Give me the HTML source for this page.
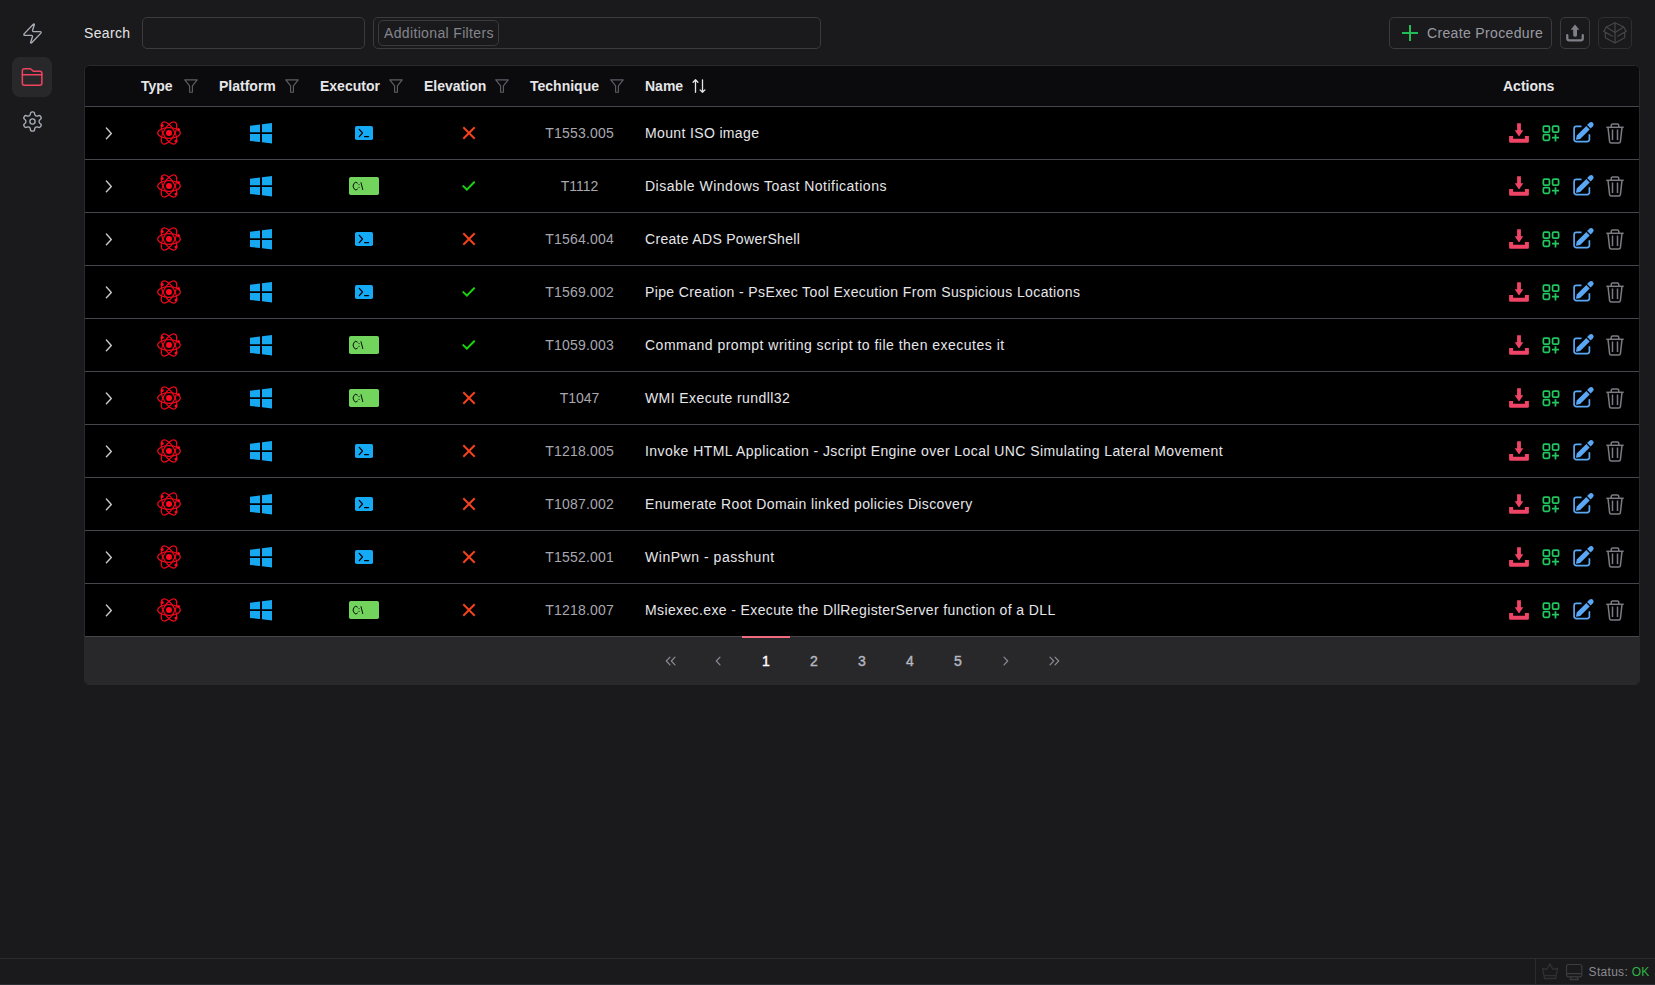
<!DOCTYPE html><html><head><meta charset="utf-8"><style>
*{box-sizing:border-box;margin:0;padding:0}
html,body{width:1655px;height:985px;overflow:hidden;background:#1a1a1c;font-family:"Liberation Sans",sans-serif;color:#e4e4e7}
.a{position:absolute}
svg{position:absolute;overflow:visible}
.lbl{font-size:14px;line-height:14px;white-space:nowrap;letter-spacing:.35px}
.box{position:absolute;border:1px solid #3a3a3f;border-radius:5px}
.th{position:absolute;font-size:14px;line-height:14px;font-weight:bold;color:#e6e6e9;white-space:nowrap}
.tech{position:absolute;font-size:14px;line-height:14px;color:#a8a8b0;white-space:nowrap;text-align:center;width:120px}
.nm{position:absolute;font-size:14px;line-height:14px;color:#e6e6ea;white-space:nowrap;letter-spacing:.35px;left:645px}
.pg{position:absolute;font-size:14px;line-height:14px;font-weight:normal;-webkit-text-stroke:.4px currentColor;color:#b4b4bc;width:48px;text-align:center}
</style></head><body>
<svg style="left:20.5px;top:21.5px" width="23" height="23" viewBox="0 0 24 24" fill="none" stroke="#a9adb8" stroke-width="1.4" stroke-linecap="round" stroke-linejoin="round"><path d="M4 14a1 1 0 0 1-.78-1.63l9.9-10.2a.5.5 0 0 1 .86.46l-1.92 6.02A1 1 0 0 0 13 10h7a1 1 0 0 1 .78 1.63l-9.9 10.2a.5.5 0 0 1-.86-.46l1.92-6.02A1 1 0 0 0 11 14z"/></svg>
<div class="a" style="left:12px;top:57px;width:40px;height:40px;border-radius:8px;background:#28282b"></div>
<svg style="left:20px;top:66px" width="24" height="24" viewBox="0 0 24 24" fill="none" stroke="#f0435f" stroke-width="1.5" stroke-linecap="round" stroke-linejoin="round"><path d="M4.35 2.75H10.2a1 1 0 0 1 .7.3L13.3 5.3H19.85a2 2 0 0 1 2 2V17.25a2 2 0 0 1-2 2H4.35a2 2 0 0 1-2-2V4.75a2 2 0 0 1 2-2Z"/><path d="M2.35 8.7H21.85"/></svg>
<svg style="left:20.5px;top:109.5px" width="23" height="23" viewBox="0 0 24 24" fill="none" stroke="#a9adb8" stroke-width="1.4" stroke-linecap="round" stroke-linejoin="round"><path d="M12.22 2h-.44a2 2 0 0 0-2 2v.18a2 2 0 0 1-1 1.73l-.43.25a2 2 0 0 1-2 0l-.15-.08a2 2 0 0 0-2.73.73l-.22.38a2 2 0 0 0 .73 2.73l.15.1a2 2 0 0 1 1 1.72v.51a2 2 0 0 1-1 1.74l-.15.09a2 2 0 0 0-.73 2.73l.22.38a2 2 0 0 0 2.73.73l.15-.08a2 2 0 0 1 2 0l.43.25a2 2 0 0 1 1 1.73V20a2 2 0 0 0 2 2h.44a2 2 0 0 0 2-2v-.18a2 2 0 0 1 1-1.73l.43-.25a2 2 0 0 1 2 0l.15.08a2 2 0 0 0 2.73-.73l.22-.39a2 2 0 0 0-.73-2.73l-.15-.08a2 2 0 0 1-1-1.74v-.5a2 2 0 0 1 1-1.74l.15-.09a2 2 0 0 0 .73-2.73l-.22-.38a2 2 0 0 0-2.73-.73l-.15.08a2 2 0 0 1-2 0l-.43-.25a2 2 0 0 1-1-1.73V4a2 2 0 0 0-2-2z"/><circle cx="12" cy="12" r="2.7"/></svg>
<div class="a lbl" style="left:84px;top:26px;color:#e4e4e7;font-weight:normal">Search</div>
<div class="box" style="left:142px;top:17px;width:223px;height:32px"></div>
<div class="box" style="left:373px;top:17px;width:448px;height:32px"></div>
<div class="box" style="left:378px;top:20px;width:121px;height:26px;border-color:#3a3a3f"></div>
<div class="a lbl" style="left:384px;top:26px;color:#85858d">Additional Filters</div>
<div class="box" style="left:1389px;top:17px;width:163px;height:32px"></div>
<svg style="left:1401px;top:24px" width="18" height="18" viewBox="0 0 18 18"><path d="M9 1V17M1 9H17" stroke="#22bb58" stroke-width="2"/></svg>
<div class="a lbl" style="left:1427px;top:26px;color:#9a9aa2">Create Procedure</div>
<div class="box" style="left:1560px;top:17px;width:30px;height:32px"></div>
<svg style="left:1566px;top:24px" width="18" height="18" viewBox="0 0 18 18"><path d="M9 0.4L13.3 5.7H4.7Z" fill="#7f7f87"/><rect x="7.2" y="4" width="3.8" height="8.8" rx="1.9" fill="#7f7f87"/><path d="M1.25 11.1V14.2a2.1 2.1 0 0 0 2.1 2.1H14.65a2.1 2.1 0 0 0 2.1-2.1V11.1" fill="none" stroke="#7f7f87" stroke-width="2.3" stroke-linecap="round"/></svg>
<div class="box" style="left:1598px;top:17px;width:34px;height:32px;border-color:#2e2e32"></div>
<svg style="left:1603px;top:22px" width="24" height="22" viewBox="0 0 24 22" fill="none" stroke="#45454b" stroke-width="1.2" stroke-linejoin="round" stroke-linecap="round"><path d="M12 0.8L3.3 5L12 10.4L20.7 5Z"/><path d="M12 0.8V21M3.3 5L0.8 9.4L9.5 14.2M20.7 5L23.2 9.4L14.5 14.2M2.3 11.2V15.7L12 21L21.7 15.7V11.2"/></svg>
<div class="a" style="left:84px;top:65px;width:1556px;height:620px;border:1px solid #29292d;border-radius:6px 6px 4px 4px;overflow:hidden;background:#000">
<div class="a" style="left:0;top:0;width:100%;height:41px;background:#0b0b0d;border-bottom:1px solid #46464d"></div>
<div class="a" style="left:0;top:41px;width:100%;height:53px;border-bottom:1px solid #46464d"></div>
<div class="a" style="left:0;top:94px;width:100%;height:53px;border-bottom:1px solid #46464d"></div>
<div class="a" style="left:0;top:147px;width:100%;height:53px;border-bottom:1px solid #46464d"></div>
<div class="a" style="left:0;top:200px;width:100%;height:53px;border-bottom:1px solid #46464d"></div>
<div class="a" style="left:0;top:253px;width:100%;height:53px;border-bottom:1px solid #46464d"></div>
<div class="a" style="left:0;top:306px;width:100%;height:53px;border-bottom:1px solid #46464d"></div>
<div class="a" style="left:0;top:359px;width:100%;height:53px;border-bottom:1px solid #46464d"></div>
<div class="a" style="left:0;top:412px;width:100%;height:53px;border-bottom:1px solid #46464d"></div>
<div class="a" style="left:0;top:465px;width:100%;height:53px;border-bottom:1px solid #46464d"></div>
<div class="a" style="left:0;top:518px;width:100%;height:53px;border-bottom:1px solid #46464d"></div>
<div class="a" style="left:0;top:571px;width:100%;height:48px;background:#28282b"></div>
</div>
<div class="th" style="left:141px;top:79px">Type</div><svg class="a" style="left:184px;top:79px" width="14" height="14" viewBox="0 0 14 14"><path d="M0.8 0.8H13.2L8.4 6.8V13.2H5.6V6.8Z" fill="none" stroke="#5e5e67" stroke-width="1.15" stroke-linejoin="round"/></svg>
<div class="th" style="left:219px;top:79px">Platform</div><svg class="a" style="left:285px;top:79px" width="14" height="14" viewBox="0 0 14 14"><path d="M0.8 0.8H13.2L8.4 6.8V13.2H5.6V6.8Z" fill="none" stroke="#5e5e67" stroke-width="1.15" stroke-linejoin="round"/></svg>
<div class="th" style="left:320px;top:79px">Executor</div><svg class="a" style="left:389px;top:79px" width="14" height="14" viewBox="0 0 14 14"><path d="M0.8 0.8H13.2L8.4 6.8V13.2H5.6V6.8Z" fill="none" stroke="#5e5e67" stroke-width="1.15" stroke-linejoin="round"/></svg>
<div class="th" style="left:424px;top:79px">Elevation</div><svg class="a" style="left:495px;top:79px" width="14" height="14" viewBox="0 0 14 14"><path d="M0.8 0.8H13.2L8.4 6.8V13.2H5.6V6.8Z" fill="none" stroke="#5e5e67" stroke-width="1.15" stroke-linejoin="round"/></svg>
<div class="th" style="left:530px;top:79px">Technique</div><svg class="a" style="left:610px;top:79px" width="14" height="14" viewBox="0 0 14 14"><path d="M0.8 0.8H13.2L8.4 6.8V13.2H5.6V6.8Z" fill="none" stroke="#5e5e67" stroke-width="1.15" stroke-linejoin="round"/></svg>
<div class="th" style="left:645px;top:79px">Name</div>
<svg style="left:691px;top:79px" width="16" height="15" viewBox="0 0 16 15" fill="none" stroke="#e6e6e9" stroke-width="1.3" stroke-linecap="round" stroke-linejoin="round"><path d="M4.5 13.3V0.8M2.1 3.2L4.5 0.8L6.9 3.2M11.5 0.8V13.3M9.1 10.9L11.5 13.3L13.9 10.9"/></svg>
<div class="th" style="left:1503px;top:79px">Actions</div>
<svg style="left:105px;top:126.5px" width="8" height="13" viewBox="0 0 8 13"><path d="M1.4 1.1L6.3 6.4L1.4 11.7" fill="none" stroke="#c8c8cc" stroke-width="1.4" stroke-linecap="round" stroke-linejoin="round"/></svg>
<svg style="left:156px;top:120px" width="26" height="26" viewBox="-13 -13 26 26" fill="none" stroke="#f2071b" stroke-width="1.2"><ellipse rx="11.3" ry="5.3"/><ellipse rx="12.3" ry="5.5" transform="rotate(60)"/><ellipse rx="12.3" ry="5.5" transform="rotate(-60)"/><circle r="3" fill="#ff0a1e" stroke="none"/><circle cx="-6.8" cy="-7.4" r="1.5" fill="#ff0a1e" stroke="none"/><circle cx="9.5" cy="-3.5" r="1.5" fill="#ff0a1e" stroke="none"/><circle cx="7" cy="8" r="1.5" fill="#ff0a1e" stroke="none"/></svg>
<svg style="left:250px;top:123px" width="22" height="21" viewBox="0 0 22 21" fill="#17a8f2"><path d="M0 2.7L10 1.5V9.3H0Z"/><path d="M12 1.2L22 0V9.3H12Z"/><path d="M0 11H10V19.1L0 17.9Z"/><path d="M12 11H22V20.4L12 19.3Z"/></svg>
<svg style="left:355px;top:126px" width="18" height="14" viewBox="0 0 18 14"><rect width="18" height="14" rx="1.8" fill="#14aaf5"/><path d="M4.3 3.3L7.5 7L4.3 10.7" fill="none" stroke="#000" stroke-width="1.2" stroke-linecap="round" stroke-linejoin="round"/><path d="M9.6 10.6H13.6" stroke="#000" stroke-width="1.3" stroke-linecap="round"/></svg>
<svg style="left:463px;top:127px" width="12" height="12" viewBox="0 0 12 12"><path d="M1 1L11 11M11 1L1 11" stroke="#f5421e" stroke-width="2" stroke-linecap="square"/></svg>
<div class="tech" style="left:519.6px;top:126px;letter-spacing:0.2px">T1553.005</div>
<div class="nm" style="top:126px;letter-spacing:0.357px">Mount ISO image</div>
<svg style="left:1509px;top:123px" width="20" height="20" viewBox="0 0 20 20" fill="#ef4466"><path d="M8.1 0.3H11.9V7.3H14.3L10 13.5L5.7 7.3H8.1Z"/><path d="M0.1 13H4.1V15.8H15.9V13H19.9V18.4A1.3 1.3 0 0 1 18.6 19.7H1.4A1.3 1.3 0 0 1 0.1 18.4Z"/></svg>
<svg style="left:1542px;top:124.8px" width="18" height="17" viewBox="0 0 18 17" fill="none" stroke="#22c55e" stroke-width="1.75"><rect x="1.35" y="1.2" width="6.1" height="5.9" rx="1.2"/><rect x="10.6" y="1.2" width="6" height="5.9" rx="1.2"/><rect x="1.35" y="9.7" width="6.1" height="5.6" rx="1.2"/><path d="M10 12.7H17M13.5 9.2V16.4"/></svg>
<svg style="left:1573px;top:122px" width="20" height="21" viewBox="0 0 20 21"><path d="M8.5 4.3H3.3a2.2 2.2 0 0 0-2.2 2.2V17.4a2.2 2.2 0 0 0 2.2 2.2H14.2a2.2 2.2 0 0 0 2.2-2.2V12.3" fill="none" stroke="#5aa8f5" stroke-width="1.7"/><path d="M3.41 17.71 L2.99 17.29 L3.77 13.54 L13.31 3.99 L16.71 7.39 L7.16 16.93Z" fill="#5aa8f5"/><path d="M14.09 3.08 L16.35 0.81 A2.50 2.50 0 0 1 19.89 4.35 L17.62 6.61 Z" fill="#5aa8f5"/></svg>
<svg style="left:1606px;top:122.5px" width="18" height="21" viewBox="0 0 18 21" fill="none" stroke="#7b7b82" stroke-width="1.5" stroke-linejoin="round"><path d="M5.2 4V2.4a1.5 1.5 0 0 1 1.5-1.5h4.6a1.5 1.5 0 0 1 1.5 1.5V4"/><path d="M0.3 4.3H17.7"/><path d="M2 4.3L3.6 18.6a1.6 1.6 0 0 0 1.6 1.4H12.8a1.6 1.6 0 0 0 1.6-1.4L16 4.3"/><path d="M6.5 6.6V17M11.5 6.6V17"/></svg>
<svg style="left:105px;top:179.5px" width="8" height="13" viewBox="0 0 8 13"><path d="M1.4 1.1L6.3 6.4L1.4 11.7" fill="none" stroke="#c8c8cc" stroke-width="1.4" stroke-linecap="round" stroke-linejoin="round"/></svg>
<svg style="left:156px;top:173px" width="26" height="26" viewBox="-13 -13 26 26" fill="none" stroke="#f2071b" stroke-width="1.2"><ellipse rx="11.3" ry="5.3"/><ellipse rx="12.3" ry="5.5" transform="rotate(60)"/><ellipse rx="12.3" ry="5.5" transform="rotate(-60)"/><circle r="3" fill="#ff0a1e" stroke="none"/><circle cx="-6.8" cy="-7.4" r="1.5" fill="#ff0a1e" stroke="none"/><circle cx="9.5" cy="-3.5" r="1.5" fill="#ff0a1e" stroke="none"/><circle cx="7" cy="8" r="1.5" fill="#ff0a1e" stroke="none"/></svg>
<svg style="left:250px;top:176px" width="22" height="21" viewBox="0 0 22 21" fill="#17a8f2"><path d="M0 2.7L10 1.5V9.3H0Z"/><path d="M12 1.2L22 0V9.3H12Z"/><path d="M0 11H10V19.1L0 17.9Z"/><path d="M12 11H22V20.4L12 19.3Z"/></svg>
<svg style="left:349px;top:177px" width="30" height="18" viewBox="0 0 30 18"><rect width="30" height="18" rx="1.8" fill="#72d45c"/><path d="M8.7 6.3A2.7 3.75 0 1 0 8.7 11.9" fill="none" stroke="#000" stroke-width="0.95"/><path d="M9.5 7.6H10.6M9.5 10.4H10.6" stroke="#000" stroke-width="0.8"/><path d="M11.9 5.3L13.9 13" stroke="#000" stroke-width="0.95"/></svg>
<svg style="left:462px;top:181px" width="14" height="12" viewBox="0 0 14 12"><path d="M1.3 5.1L4.9 8.7L12.1 1.3" fill="none" stroke="#19d60d" stroke-width="2" stroke-linecap="round"/></svg>
<div class="tech" style="left:519.5px;top:179px;letter-spacing:0px">T1112</div>
<div class="nm" style="top:179px;letter-spacing:0.494px">Disable Windows Toast Notifications</div>
<svg style="left:1509px;top:176px" width="20" height="20" viewBox="0 0 20 20" fill="#ef4466"><path d="M8.1 0.3H11.9V7.3H14.3L10 13.5L5.7 7.3H8.1Z"/><path d="M0.1 13H4.1V15.8H15.9V13H19.9V18.4A1.3 1.3 0 0 1 18.6 19.7H1.4A1.3 1.3 0 0 1 0.1 18.4Z"/></svg>
<svg style="left:1542px;top:177.8px" width="18" height="17" viewBox="0 0 18 17" fill="none" stroke="#22c55e" stroke-width="1.75"><rect x="1.35" y="1.2" width="6.1" height="5.9" rx="1.2"/><rect x="10.6" y="1.2" width="6" height="5.9" rx="1.2"/><rect x="1.35" y="9.7" width="6.1" height="5.6" rx="1.2"/><path d="M10 12.7H17M13.5 9.2V16.4"/></svg>
<svg style="left:1573px;top:175px" width="20" height="21" viewBox="0 0 20 21"><path d="M8.5 4.3H3.3a2.2 2.2 0 0 0-2.2 2.2V17.4a2.2 2.2 0 0 0 2.2 2.2H14.2a2.2 2.2 0 0 0 2.2-2.2V12.3" fill="none" stroke="#5aa8f5" stroke-width="1.7"/><path d="M3.41 17.71 L2.99 17.29 L3.77 13.54 L13.31 3.99 L16.71 7.39 L7.16 16.93Z" fill="#5aa8f5"/><path d="M14.09 3.08 L16.35 0.81 A2.50 2.50 0 0 1 19.89 4.35 L17.62 6.61 Z" fill="#5aa8f5"/></svg>
<svg style="left:1606px;top:175.5px" width="18" height="21" viewBox="0 0 18 21" fill="none" stroke="#7b7b82" stroke-width="1.5" stroke-linejoin="round"><path d="M5.2 4V2.4a1.5 1.5 0 0 1 1.5-1.5h4.6a1.5 1.5 0 0 1 1.5 1.5V4"/><path d="M0.3 4.3H17.7"/><path d="M2 4.3L3.6 18.6a1.6 1.6 0 0 0 1.6 1.4H12.8a1.6 1.6 0 0 0 1.6-1.4L16 4.3"/><path d="M6.5 6.6V17M11.5 6.6V17"/></svg>
<svg style="left:105px;top:232.5px" width="8" height="13" viewBox="0 0 8 13"><path d="M1.4 1.1L6.3 6.4L1.4 11.7" fill="none" stroke="#c8c8cc" stroke-width="1.4" stroke-linecap="round" stroke-linejoin="round"/></svg>
<svg style="left:156px;top:226px" width="26" height="26" viewBox="-13 -13 26 26" fill="none" stroke="#f2071b" stroke-width="1.2"><ellipse rx="11.3" ry="5.3"/><ellipse rx="12.3" ry="5.5" transform="rotate(60)"/><ellipse rx="12.3" ry="5.5" transform="rotate(-60)"/><circle r="3" fill="#ff0a1e" stroke="none"/><circle cx="-6.8" cy="-7.4" r="1.5" fill="#ff0a1e" stroke="none"/><circle cx="9.5" cy="-3.5" r="1.5" fill="#ff0a1e" stroke="none"/><circle cx="7" cy="8" r="1.5" fill="#ff0a1e" stroke="none"/></svg>
<svg style="left:250px;top:229px" width="22" height="21" viewBox="0 0 22 21" fill="#17a8f2"><path d="M0 2.7L10 1.5V9.3H0Z"/><path d="M12 1.2L22 0V9.3H12Z"/><path d="M0 11H10V19.1L0 17.9Z"/><path d="M12 11H22V20.4L12 19.3Z"/></svg>
<svg style="left:355px;top:232px" width="18" height="14" viewBox="0 0 18 14"><rect width="18" height="14" rx="1.8" fill="#14aaf5"/><path d="M4.3 3.3L7.5 7L4.3 10.7" fill="none" stroke="#000" stroke-width="1.2" stroke-linecap="round" stroke-linejoin="round"/><path d="M9.6 10.6H13.6" stroke="#000" stroke-width="1.3" stroke-linecap="round"/></svg>
<svg style="left:463px;top:233px" width="12" height="12" viewBox="0 0 12 12"><path d="M1 1L11 11M11 1L1 11" stroke="#f5421e" stroke-width="2" stroke-linecap="square"/></svg>
<div class="tech" style="left:519.6px;top:232px;letter-spacing:0.2px">T1564.004</div>
<div class="nm" style="top:232px;letter-spacing:0.310px">Create ADS PowerShell</div>
<svg style="left:1509px;top:229px" width="20" height="20" viewBox="0 0 20 20" fill="#ef4466"><path d="M8.1 0.3H11.9V7.3H14.3L10 13.5L5.7 7.3H8.1Z"/><path d="M0.1 13H4.1V15.8H15.9V13H19.9V18.4A1.3 1.3 0 0 1 18.6 19.7H1.4A1.3 1.3 0 0 1 0.1 18.4Z"/></svg>
<svg style="left:1542px;top:230.8px" width="18" height="17" viewBox="0 0 18 17" fill="none" stroke="#22c55e" stroke-width="1.75"><rect x="1.35" y="1.2" width="6.1" height="5.9" rx="1.2"/><rect x="10.6" y="1.2" width="6" height="5.9" rx="1.2"/><rect x="1.35" y="9.7" width="6.1" height="5.6" rx="1.2"/><path d="M10 12.7H17M13.5 9.2V16.4"/></svg>
<svg style="left:1573px;top:228px" width="20" height="21" viewBox="0 0 20 21"><path d="M8.5 4.3H3.3a2.2 2.2 0 0 0-2.2 2.2V17.4a2.2 2.2 0 0 0 2.2 2.2H14.2a2.2 2.2 0 0 0 2.2-2.2V12.3" fill="none" stroke="#5aa8f5" stroke-width="1.7"/><path d="M3.41 17.71 L2.99 17.29 L3.77 13.54 L13.31 3.99 L16.71 7.39 L7.16 16.93Z" fill="#5aa8f5"/><path d="M14.09 3.08 L16.35 0.81 A2.50 2.50 0 0 1 19.89 4.35 L17.62 6.61 Z" fill="#5aa8f5"/></svg>
<svg style="left:1606px;top:228.5px" width="18" height="21" viewBox="0 0 18 21" fill="none" stroke="#7b7b82" stroke-width="1.5" stroke-linejoin="round"><path d="M5.2 4V2.4a1.5 1.5 0 0 1 1.5-1.5h4.6a1.5 1.5 0 0 1 1.5 1.5V4"/><path d="M0.3 4.3H17.7"/><path d="M2 4.3L3.6 18.6a1.6 1.6 0 0 0 1.6 1.4H12.8a1.6 1.6 0 0 0 1.6-1.4L16 4.3"/><path d="M6.5 6.6V17M11.5 6.6V17"/></svg>
<svg style="left:105px;top:285.5px" width="8" height="13" viewBox="0 0 8 13"><path d="M1.4 1.1L6.3 6.4L1.4 11.7" fill="none" stroke="#c8c8cc" stroke-width="1.4" stroke-linecap="round" stroke-linejoin="round"/></svg>
<svg style="left:156px;top:279px" width="26" height="26" viewBox="-13 -13 26 26" fill="none" stroke="#f2071b" stroke-width="1.2"><ellipse rx="11.3" ry="5.3"/><ellipse rx="12.3" ry="5.5" transform="rotate(60)"/><ellipse rx="12.3" ry="5.5" transform="rotate(-60)"/><circle r="3" fill="#ff0a1e" stroke="none"/><circle cx="-6.8" cy="-7.4" r="1.5" fill="#ff0a1e" stroke="none"/><circle cx="9.5" cy="-3.5" r="1.5" fill="#ff0a1e" stroke="none"/><circle cx="7" cy="8" r="1.5" fill="#ff0a1e" stroke="none"/></svg>
<svg style="left:250px;top:282px" width="22" height="21" viewBox="0 0 22 21" fill="#17a8f2"><path d="M0 2.7L10 1.5V9.3H0Z"/><path d="M12 1.2L22 0V9.3H12Z"/><path d="M0 11H10V19.1L0 17.9Z"/><path d="M12 11H22V20.4L12 19.3Z"/></svg>
<svg style="left:355px;top:285px" width="18" height="14" viewBox="0 0 18 14"><rect width="18" height="14" rx="1.8" fill="#14aaf5"/><path d="M4.3 3.3L7.5 7L4.3 10.7" fill="none" stroke="#000" stroke-width="1.2" stroke-linecap="round" stroke-linejoin="round"/><path d="M9.6 10.6H13.6" stroke="#000" stroke-width="1.3" stroke-linecap="round"/></svg>
<svg style="left:462px;top:287px" width="14" height="12" viewBox="0 0 14 12"><path d="M1.3 5.1L4.9 8.7L12.1 1.3" fill="none" stroke="#19d60d" stroke-width="2" stroke-linecap="round"/></svg>
<div class="tech" style="left:519.6px;top:285px;letter-spacing:0.2px">T1569.002</div>
<div class="nm" style="top:285px;letter-spacing:0.379px">Pipe Creation - PsExec Tool Execution From Suspicious Locations</div>
<svg style="left:1509px;top:282px" width="20" height="20" viewBox="0 0 20 20" fill="#ef4466"><path d="M8.1 0.3H11.9V7.3H14.3L10 13.5L5.7 7.3H8.1Z"/><path d="M0.1 13H4.1V15.8H15.9V13H19.9V18.4A1.3 1.3 0 0 1 18.6 19.7H1.4A1.3 1.3 0 0 1 0.1 18.4Z"/></svg>
<svg style="left:1542px;top:283.8px" width="18" height="17" viewBox="0 0 18 17" fill="none" stroke="#22c55e" stroke-width="1.75"><rect x="1.35" y="1.2" width="6.1" height="5.9" rx="1.2"/><rect x="10.6" y="1.2" width="6" height="5.9" rx="1.2"/><rect x="1.35" y="9.7" width="6.1" height="5.6" rx="1.2"/><path d="M10 12.7H17M13.5 9.2V16.4"/></svg>
<svg style="left:1573px;top:281px" width="20" height="21" viewBox="0 0 20 21"><path d="M8.5 4.3H3.3a2.2 2.2 0 0 0-2.2 2.2V17.4a2.2 2.2 0 0 0 2.2 2.2H14.2a2.2 2.2 0 0 0 2.2-2.2V12.3" fill="none" stroke="#5aa8f5" stroke-width="1.7"/><path d="M3.41 17.71 L2.99 17.29 L3.77 13.54 L13.31 3.99 L16.71 7.39 L7.16 16.93Z" fill="#5aa8f5"/><path d="M14.09 3.08 L16.35 0.81 A2.50 2.50 0 0 1 19.89 4.35 L17.62 6.61 Z" fill="#5aa8f5"/></svg>
<svg style="left:1606px;top:281.5px" width="18" height="21" viewBox="0 0 18 21" fill="none" stroke="#7b7b82" stroke-width="1.5" stroke-linejoin="round"><path d="M5.2 4V2.4a1.5 1.5 0 0 1 1.5-1.5h4.6a1.5 1.5 0 0 1 1.5 1.5V4"/><path d="M0.3 4.3H17.7"/><path d="M2 4.3L3.6 18.6a1.6 1.6 0 0 0 1.6 1.4H12.8a1.6 1.6 0 0 0 1.6-1.4L16 4.3"/><path d="M6.5 6.6V17M11.5 6.6V17"/></svg>
<svg style="left:105px;top:338.5px" width="8" height="13" viewBox="0 0 8 13"><path d="M1.4 1.1L6.3 6.4L1.4 11.7" fill="none" stroke="#c8c8cc" stroke-width="1.4" stroke-linecap="round" stroke-linejoin="round"/></svg>
<svg style="left:156px;top:332px" width="26" height="26" viewBox="-13 -13 26 26" fill="none" stroke="#f2071b" stroke-width="1.2"><ellipse rx="11.3" ry="5.3"/><ellipse rx="12.3" ry="5.5" transform="rotate(60)"/><ellipse rx="12.3" ry="5.5" transform="rotate(-60)"/><circle r="3" fill="#ff0a1e" stroke="none"/><circle cx="-6.8" cy="-7.4" r="1.5" fill="#ff0a1e" stroke="none"/><circle cx="9.5" cy="-3.5" r="1.5" fill="#ff0a1e" stroke="none"/><circle cx="7" cy="8" r="1.5" fill="#ff0a1e" stroke="none"/></svg>
<svg style="left:250px;top:335px" width="22" height="21" viewBox="0 0 22 21" fill="#17a8f2"><path d="M0 2.7L10 1.5V9.3H0Z"/><path d="M12 1.2L22 0V9.3H12Z"/><path d="M0 11H10V19.1L0 17.9Z"/><path d="M12 11H22V20.4L12 19.3Z"/></svg>
<svg style="left:349px;top:336px" width="30" height="18" viewBox="0 0 30 18"><rect width="30" height="18" rx="1.8" fill="#72d45c"/><path d="M8.7 6.3A2.7 3.75 0 1 0 8.7 11.9" fill="none" stroke="#000" stroke-width="0.95"/><path d="M9.5 7.6H10.6M9.5 10.4H10.6" stroke="#000" stroke-width="0.8"/><path d="M11.9 5.3L13.9 13" stroke="#000" stroke-width="0.95"/></svg>
<svg style="left:462px;top:340px" width="14" height="12" viewBox="0 0 14 12"><path d="M1.3 5.1L4.9 8.7L12.1 1.3" fill="none" stroke="#19d60d" stroke-width="2" stroke-linecap="round"/></svg>
<div class="tech" style="left:519.6px;top:338px;letter-spacing:0.2px">T1059.003</div>
<div class="nm" style="top:338px;letter-spacing:0.493px">Command prompt writing script to file then executes it</div>
<svg style="left:1509px;top:335px" width="20" height="20" viewBox="0 0 20 20" fill="#ef4466"><path d="M8.1 0.3H11.9V7.3H14.3L10 13.5L5.7 7.3H8.1Z"/><path d="M0.1 13H4.1V15.8H15.9V13H19.9V18.4A1.3 1.3 0 0 1 18.6 19.7H1.4A1.3 1.3 0 0 1 0.1 18.4Z"/></svg>
<svg style="left:1542px;top:336.8px" width="18" height="17" viewBox="0 0 18 17" fill="none" stroke="#22c55e" stroke-width="1.75"><rect x="1.35" y="1.2" width="6.1" height="5.9" rx="1.2"/><rect x="10.6" y="1.2" width="6" height="5.9" rx="1.2"/><rect x="1.35" y="9.7" width="6.1" height="5.6" rx="1.2"/><path d="M10 12.7H17M13.5 9.2V16.4"/></svg>
<svg style="left:1573px;top:334px" width="20" height="21" viewBox="0 0 20 21"><path d="M8.5 4.3H3.3a2.2 2.2 0 0 0-2.2 2.2V17.4a2.2 2.2 0 0 0 2.2 2.2H14.2a2.2 2.2 0 0 0 2.2-2.2V12.3" fill="none" stroke="#5aa8f5" stroke-width="1.7"/><path d="M3.41 17.71 L2.99 17.29 L3.77 13.54 L13.31 3.99 L16.71 7.39 L7.16 16.93Z" fill="#5aa8f5"/><path d="M14.09 3.08 L16.35 0.81 A2.50 2.50 0 0 1 19.89 4.35 L17.62 6.61 Z" fill="#5aa8f5"/></svg>
<svg style="left:1606px;top:334.5px" width="18" height="21" viewBox="0 0 18 21" fill="none" stroke="#7b7b82" stroke-width="1.5" stroke-linejoin="round"><path d="M5.2 4V2.4a1.5 1.5 0 0 1 1.5-1.5h4.6a1.5 1.5 0 0 1 1.5 1.5V4"/><path d="M0.3 4.3H17.7"/><path d="M2 4.3L3.6 18.6a1.6 1.6 0 0 0 1.6 1.4H12.8a1.6 1.6 0 0 0 1.6-1.4L16 4.3"/><path d="M6.5 6.6V17M11.5 6.6V17"/></svg>
<svg style="left:105px;top:391.5px" width="8" height="13" viewBox="0 0 8 13"><path d="M1.4 1.1L6.3 6.4L1.4 11.7" fill="none" stroke="#c8c8cc" stroke-width="1.4" stroke-linecap="round" stroke-linejoin="round"/></svg>
<svg style="left:156px;top:385px" width="26" height="26" viewBox="-13 -13 26 26" fill="none" stroke="#f2071b" stroke-width="1.2"><ellipse rx="11.3" ry="5.3"/><ellipse rx="12.3" ry="5.5" transform="rotate(60)"/><ellipse rx="12.3" ry="5.5" transform="rotate(-60)"/><circle r="3" fill="#ff0a1e" stroke="none"/><circle cx="-6.8" cy="-7.4" r="1.5" fill="#ff0a1e" stroke="none"/><circle cx="9.5" cy="-3.5" r="1.5" fill="#ff0a1e" stroke="none"/><circle cx="7" cy="8" r="1.5" fill="#ff0a1e" stroke="none"/></svg>
<svg style="left:250px;top:388px" width="22" height="21" viewBox="0 0 22 21" fill="#17a8f2"><path d="M0 2.7L10 1.5V9.3H0Z"/><path d="M12 1.2L22 0V9.3H12Z"/><path d="M0 11H10V19.1L0 17.9Z"/><path d="M12 11H22V20.4L12 19.3Z"/></svg>
<svg style="left:349px;top:389px" width="30" height="18" viewBox="0 0 30 18"><rect width="30" height="18" rx="1.8" fill="#72d45c"/><path d="M8.7 6.3A2.7 3.75 0 1 0 8.7 11.9" fill="none" stroke="#000" stroke-width="0.95"/><path d="M9.5 7.6H10.6M9.5 10.4H10.6" stroke="#000" stroke-width="0.8"/><path d="M11.9 5.3L13.9 13" stroke="#000" stroke-width="0.95"/></svg>
<svg style="left:463px;top:392px" width="12" height="12" viewBox="0 0 12 12"><path d="M1 1L11 11M11 1L1 11" stroke="#f5421e" stroke-width="2" stroke-linecap="square"/></svg>
<div class="tech" style="left:519.5px;top:391px;letter-spacing:0px">T1047</div>
<div class="nm" style="top:391px;letter-spacing:0.408px">WMI Execute rundll32</div>
<svg style="left:1509px;top:388px" width="20" height="20" viewBox="0 0 20 20" fill="#ef4466"><path d="M8.1 0.3H11.9V7.3H14.3L10 13.5L5.7 7.3H8.1Z"/><path d="M0.1 13H4.1V15.8H15.9V13H19.9V18.4A1.3 1.3 0 0 1 18.6 19.7H1.4A1.3 1.3 0 0 1 0.1 18.4Z"/></svg>
<svg style="left:1542px;top:389.8px" width="18" height="17" viewBox="0 0 18 17" fill="none" stroke="#22c55e" stroke-width="1.75"><rect x="1.35" y="1.2" width="6.1" height="5.9" rx="1.2"/><rect x="10.6" y="1.2" width="6" height="5.9" rx="1.2"/><rect x="1.35" y="9.7" width="6.1" height="5.6" rx="1.2"/><path d="M10 12.7H17M13.5 9.2V16.4"/></svg>
<svg style="left:1573px;top:387px" width="20" height="21" viewBox="0 0 20 21"><path d="M8.5 4.3H3.3a2.2 2.2 0 0 0-2.2 2.2V17.4a2.2 2.2 0 0 0 2.2 2.2H14.2a2.2 2.2 0 0 0 2.2-2.2V12.3" fill="none" stroke="#5aa8f5" stroke-width="1.7"/><path d="M3.41 17.71 L2.99 17.29 L3.77 13.54 L13.31 3.99 L16.71 7.39 L7.16 16.93Z" fill="#5aa8f5"/><path d="M14.09 3.08 L16.35 0.81 A2.50 2.50 0 0 1 19.89 4.35 L17.62 6.61 Z" fill="#5aa8f5"/></svg>
<svg style="left:1606px;top:387.5px" width="18" height="21" viewBox="0 0 18 21" fill="none" stroke="#7b7b82" stroke-width="1.5" stroke-linejoin="round"><path d="M5.2 4V2.4a1.5 1.5 0 0 1 1.5-1.5h4.6a1.5 1.5 0 0 1 1.5 1.5V4"/><path d="M0.3 4.3H17.7"/><path d="M2 4.3L3.6 18.6a1.6 1.6 0 0 0 1.6 1.4H12.8a1.6 1.6 0 0 0 1.6-1.4L16 4.3"/><path d="M6.5 6.6V17M11.5 6.6V17"/></svg>
<svg style="left:105px;top:444.5px" width="8" height="13" viewBox="0 0 8 13"><path d="M1.4 1.1L6.3 6.4L1.4 11.7" fill="none" stroke="#c8c8cc" stroke-width="1.4" stroke-linecap="round" stroke-linejoin="round"/></svg>
<svg style="left:156px;top:438px" width="26" height="26" viewBox="-13 -13 26 26" fill="none" stroke="#f2071b" stroke-width="1.2"><ellipse rx="11.3" ry="5.3"/><ellipse rx="12.3" ry="5.5" transform="rotate(60)"/><ellipse rx="12.3" ry="5.5" transform="rotate(-60)"/><circle r="3" fill="#ff0a1e" stroke="none"/><circle cx="-6.8" cy="-7.4" r="1.5" fill="#ff0a1e" stroke="none"/><circle cx="9.5" cy="-3.5" r="1.5" fill="#ff0a1e" stroke="none"/><circle cx="7" cy="8" r="1.5" fill="#ff0a1e" stroke="none"/></svg>
<svg style="left:250px;top:441px" width="22" height="21" viewBox="0 0 22 21" fill="#17a8f2"><path d="M0 2.7L10 1.5V9.3H0Z"/><path d="M12 1.2L22 0V9.3H12Z"/><path d="M0 11H10V19.1L0 17.9Z"/><path d="M12 11H22V20.4L12 19.3Z"/></svg>
<svg style="left:355px;top:444px" width="18" height="14" viewBox="0 0 18 14"><rect width="18" height="14" rx="1.8" fill="#14aaf5"/><path d="M4.3 3.3L7.5 7L4.3 10.7" fill="none" stroke="#000" stroke-width="1.2" stroke-linecap="round" stroke-linejoin="round"/><path d="M9.6 10.6H13.6" stroke="#000" stroke-width="1.3" stroke-linecap="round"/></svg>
<svg style="left:463px;top:445px" width="12" height="12" viewBox="0 0 12 12"><path d="M1 1L11 11M11 1L1 11" stroke="#f5421e" stroke-width="2" stroke-linecap="square"/></svg>
<div class="tech" style="left:519.6px;top:444px;letter-spacing:0.2px">T1218.005</div>
<div class="nm" style="top:444px;letter-spacing:0.427px">Invoke HTML Application - Jscript Engine over Local UNC Simulating Lateral Movement</div>
<svg style="left:1509px;top:441px" width="20" height="20" viewBox="0 0 20 20" fill="#ef4466"><path d="M8.1 0.3H11.9V7.3H14.3L10 13.5L5.7 7.3H8.1Z"/><path d="M0.1 13H4.1V15.8H15.9V13H19.9V18.4A1.3 1.3 0 0 1 18.6 19.7H1.4A1.3 1.3 0 0 1 0.1 18.4Z"/></svg>
<svg style="left:1542px;top:442.8px" width="18" height="17" viewBox="0 0 18 17" fill="none" stroke="#22c55e" stroke-width="1.75"><rect x="1.35" y="1.2" width="6.1" height="5.9" rx="1.2"/><rect x="10.6" y="1.2" width="6" height="5.9" rx="1.2"/><rect x="1.35" y="9.7" width="6.1" height="5.6" rx="1.2"/><path d="M10 12.7H17M13.5 9.2V16.4"/></svg>
<svg style="left:1573px;top:440px" width="20" height="21" viewBox="0 0 20 21"><path d="M8.5 4.3H3.3a2.2 2.2 0 0 0-2.2 2.2V17.4a2.2 2.2 0 0 0 2.2 2.2H14.2a2.2 2.2 0 0 0 2.2-2.2V12.3" fill="none" stroke="#5aa8f5" stroke-width="1.7"/><path d="M3.41 17.71 L2.99 17.29 L3.77 13.54 L13.31 3.99 L16.71 7.39 L7.16 16.93Z" fill="#5aa8f5"/><path d="M14.09 3.08 L16.35 0.81 A2.50 2.50 0 0 1 19.89 4.35 L17.62 6.61 Z" fill="#5aa8f5"/></svg>
<svg style="left:1606px;top:440.5px" width="18" height="21" viewBox="0 0 18 21" fill="none" stroke="#7b7b82" stroke-width="1.5" stroke-linejoin="round"><path d="M5.2 4V2.4a1.5 1.5 0 0 1 1.5-1.5h4.6a1.5 1.5 0 0 1 1.5 1.5V4"/><path d="M0.3 4.3H17.7"/><path d="M2 4.3L3.6 18.6a1.6 1.6 0 0 0 1.6 1.4H12.8a1.6 1.6 0 0 0 1.6-1.4L16 4.3"/><path d="M6.5 6.6V17M11.5 6.6V17"/></svg>
<svg style="left:105px;top:497.5px" width="8" height="13" viewBox="0 0 8 13"><path d="M1.4 1.1L6.3 6.4L1.4 11.7" fill="none" stroke="#c8c8cc" stroke-width="1.4" stroke-linecap="round" stroke-linejoin="round"/></svg>
<svg style="left:156px;top:491px" width="26" height="26" viewBox="-13 -13 26 26" fill="none" stroke="#f2071b" stroke-width="1.2"><ellipse rx="11.3" ry="5.3"/><ellipse rx="12.3" ry="5.5" transform="rotate(60)"/><ellipse rx="12.3" ry="5.5" transform="rotate(-60)"/><circle r="3" fill="#ff0a1e" stroke="none"/><circle cx="-6.8" cy="-7.4" r="1.5" fill="#ff0a1e" stroke="none"/><circle cx="9.5" cy="-3.5" r="1.5" fill="#ff0a1e" stroke="none"/><circle cx="7" cy="8" r="1.5" fill="#ff0a1e" stroke="none"/></svg>
<svg style="left:250px;top:494px" width="22" height="21" viewBox="0 0 22 21" fill="#17a8f2"><path d="M0 2.7L10 1.5V9.3H0Z"/><path d="M12 1.2L22 0V9.3H12Z"/><path d="M0 11H10V19.1L0 17.9Z"/><path d="M12 11H22V20.4L12 19.3Z"/></svg>
<svg style="left:355px;top:497px" width="18" height="14" viewBox="0 0 18 14"><rect width="18" height="14" rx="1.8" fill="#14aaf5"/><path d="M4.3 3.3L7.5 7L4.3 10.7" fill="none" stroke="#000" stroke-width="1.2" stroke-linecap="round" stroke-linejoin="round"/><path d="M9.6 10.6H13.6" stroke="#000" stroke-width="1.3" stroke-linecap="round"/></svg>
<svg style="left:463px;top:498px" width="12" height="12" viewBox="0 0 12 12"><path d="M1 1L11 11M11 1L1 11" stroke="#f5421e" stroke-width="2" stroke-linecap="square"/></svg>
<div class="tech" style="left:519.6px;top:497px;letter-spacing:0.2px">T1087.002</div>
<div class="nm" style="top:497px;letter-spacing:0.365px">Enumerate Root Domain linked policies Discovery</div>
<svg style="left:1509px;top:494px" width="20" height="20" viewBox="0 0 20 20" fill="#ef4466"><path d="M8.1 0.3H11.9V7.3H14.3L10 13.5L5.7 7.3H8.1Z"/><path d="M0.1 13H4.1V15.8H15.9V13H19.9V18.4A1.3 1.3 0 0 1 18.6 19.7H1.4A1.3 1.3 0 0 1 0.1 18.4Z"/></svg>
<svg style="left:1542px;top:495.8px" width="18" height="17" viewBox="0 0 18 17" fill="none" stroke="#22c55e" stroke-width="1.75"><rect x="1.35" y="1.2" width="6.1" height="5.9" rx="1.2"/><rect x="10.6" y="1.2" width="6" height="5.9" rx="1.2"/><rect x="1.35" y="9.7" width="6.1" height="5.6" rx="1.2"/><path d="M10 12.7H17M13.5 9.2V16.4"/></svg>
<svg style="left:1573px;top:493px" width="20" height="21" viewBox="0 0 20 21"><path d="M8.5 4.3H3.3a2.2 2.2 0 0 0-2.2 2.2V17.4a2.2 2.2 0 0 0 2.2 2.2H14.2a2.2 2.2 0 0 0 2.2-2.2V12.3" fill="none" stroke="#5aa8f5" stroke-width="1.7"/><path d="M3.41 17.71 L2.99 17.29 L3.77 13.54 L13.31 3.99 L16.71 7.39 L7.16 16.93Z" fill="#5aa8f5"/><path d="M14.09 3.08 L16.35 0.81 A2.50 2.50 0 0 1 19.89 4.35 L17.62 6.61 Z" fill="#5aa8f5"/></svg>
<svg style="left:1606px;top:493.5px" width="18" height="21" viewBox="0 0 18 21" fill="none" stroke="#7b7b82" stroke-width="1.5" stroke-linejoin="round"><path d="M5.2 4V2.4a1.5 1.5 0 0 1 1.5-1.5h4.6a1.5 1.5 0 0 1 1.5 1.5V4"/><path d="M0.3 4.3H17.7"/><path d="M2 4.3L3.6 18.6a1.6 1.6 0 0 0 1.6 1.4H12.8a1.6 1.6 0 0 0 1.6-1.4L16 4.3"/><path d="M6.5 6.6V17M11.5 6.6V17"/></svg>
<svg style="left:105px;top:550.5px" width="8" height="13" viewBox="0 0 8 13"><path d="M1.4 1.1L6.3 6.4L1.4 11.7" fill="none" stroke="#c8c8cc" stroke-width="1.4" stroke-linecap="round" stroke-linejoin="round"/></svg>
<svg style="left:156px;top:544px" width="26" height="26" viewBox="-13 -13 26 26" fill="none" stroke="#f2071b" stroke-width="1.2"><ellipse rx="11.3" ry="5.3"/><ellipse rx="12.3" ry="5.5" transform="rotate(60)"/><ellipse rx="12.3" ry="5.5" transform="rotate(-60)"/><circle r="3" fill="#ff0a1e" stroke="none"/><circle cx="-6.8" cy="-7.4" r="1.5" fill="#ff0a1e" stroke="none"/><circle cx="9.5" cy="-3.5" r="1.5" fill="#ff0a1e" stroke="none"/><circle cx="7" cy="8" r="1.5" fill="#ff0a1e" stroke="none"/></svg>
<svg style="left:250px;top:547px" width="22" height="21" viewBox="0 0 22 21" fill="#17a8f2"><path d="M0 2.7L10 1.5V9.3H0Z"/><path d="M12 1.2L22 0V9.3H12Z"/><path d="M0 11H10V19.1L0 17.9Z"/><path d="M12 11H22V20.4L12 19.3Z"/></svg>
<svg style="left:355px;top:550px" width="18" height="14" viewBox="0 0 18 14"><rect width="18" height="14" rx="1.8" fill="#14aaf5"/><path d="M4.3 3.3L7.5 7L4.3 10.7" fill="none" stroke="#000" stroke-width="1.2" stroke-linecap="round" stroke-linejoin="round"/><path d="M9.6 10.6H13.6" stroke="#000" stroke-width="1.3" stroke-linecap="round"/></svg>
<svg style="left:463px;top:551px" width="12" height="12" viewBox="0 0 12 12"><path d="M1 1L11 11M11 1L1 11" stroke="#f5421e" stroke-width="2" stroke-linecap="square"/></svg>
<div class="tech" style="left:519.6px;top:550px;letter-spacing:0.2px">T1552.001</div>
<div class="nm" style="top:550px;letter-spacing:0.531px">WinPwn - passhunt</div>
<svg style="left:1509px;top:547px" width="20" height="20" viewBox="0 0 20 20" fill="#ef4466"><path d="M8.1 0.3H11.9V7.3H14.3L10 13.5L5.7 7.3H8.1Z"/><path d="M0.1 13H4.1V15.8H15.9V13H19.9V18.4A1.3 1.3 0 0 1 18.6 19.7H1.4A1.3 1.3 0 0 1 0.1 18.4Z"/></svg>
<svg style="left:1542px;top:548.8px" width="18" height="17" viewBox="0 0 18 17" fill="none" stroke="#22c55e" stroke-width="1.75"><rect x="1.35" y="1.2" width="6.1" height="5.9" rx="1.2"/><rect x="10.6" y="1.2" width="6" height="5.9" rx="1.2"/><rect x="1.35" y="9.7" width="6.1" height="5.6" rx="1.2"/><path d="M10 12.7H17M13.5 9.2V16.4"/></svg>
<svg style="left:1573px;top:546px" width="20" height="21" viewBox="0 0 20 21"><path d="M8.5 4.3H3.3a2.2 2.2 0 0 0-2.2 2.2V17.4a2.2 2.2 0 0 0 2.2 2.2H14.2a2.2 2.2 0 0 0 2.2-2.2V12.3" fill="none" stroke="#5aa8f5" stroke-width="1.7"/><path d="M3.41 17.71 L2.99 17.29 L3.77 13.54 L13.31 3.99 L16.71 7.39 L7.16 16.93Z" fill="#5aa8f5"/><path d="M14.09 3.08 L16.35 0.81 A2.50 2.50 0 0 1 19.89 4.35 L17.62 6.61 Z" fill="#5aa8f5"/></svg>
<svg style="left:1606px;top:546.5px" width="18" height="21" viewBox="0 0 18 21" fill="none" stroke="#7b7b82" stroke-width="1.5" stroke-linejoin="round"><path d="M5.2 4V2.4a1.5 1.5 0 0 1 1.5-1.5h4.6a1.5 1.5 0 0 1 1.5 1.5V4"/><path d="M0.3 4.3H17.7"/><path d="M2 4.3L3.6 18.6a1.6 1.6 0 0 0 1.6 1.4H12.8a1.6 1.6 0 0 0 1.6-1.4L16 4.3"/><path d="M6.5 6.6V17M11.5 6.6V17"/></svg>
<svg style="left:105px;top:603.5px" width="8" height="13" viewBox="0 0 8 13"><path d="M1.4 1.1L6.3 6.4L1.4 11.7" fill="none" stroke="#c8c8cc" stroke-width="1.4" stroke-linecap="round" stroke-linejoin="round"/></svg>
<svg style="left:156px;top:597px" width="26" height="26" viewBox="-13 -13 26 26" fill="none" stroke="#f2071b" stroke-width="1.2"><ellipse rx="11.3" ry="5.3"/><ellipse rx="12.3" ry="5.5" transform="rotate(60)"/><ellipse rx="12.3" ry="5.5" transform="rotate(-60)"/><circle r="3" fill="#ff0a1e" stroke="none"/><circle cx="-6.8" cy="-7.4" r="1.5" fill="#ff0a1e" stroke="none"/><circle cx="9.5" cy="-3.5" r="1.5" fill="#ff0a1e" stroke="none"/><circle cx="7" cy="8" r="1.5" fill="#ff0a1e" stroke="none"/></svg>
<svg style="left:250px;top:600px" width="22" height="21" viewBox="0 0 22 21" fill="#17a8f2"><path d="M0 2.7L10 1.5V9.3H0Z"/><path d="M12 1.2L22 0V9.3H12Z"/><path d="M0 11H10V19.1L0 17.9Z"/><path d="M12 11H22V20.4L12 19.3Z"/></svg>
<svg style="left:349px;top:601px" width="30" height="18" viewBox="0 0 30 18"><rect width="30" height="18" rx="1.8" fill="#72d45c"/><path d="M8.7 6.3A2.7 3.75 0 1 0 8.7 11.9" fill="none" stroke="#000" stroke-width="0.95"/><path d="M9.5 7.6H10.6M9.5 10.4H10.6" stroke="#000" stroke-width="0.8"/><path d="M11.9 5.3L13.9 13" stroke="#000" stroke-width="0.95"/></svg>
<svg style="left:463px;top:604px" width="12" height="12" viewBox="0 0 12 12"><path d="M1 1L11 11M11 1L1 11" stroke="#f5421e" stroke-width="2" stroke-linecap="square"/></svg>
<div class="tech" style="left:519.6px;top:603px;letter-spacing:0.2px">T1218.007</div>
<div class="nm" style="top:603px;letter-spacing:0.378px">Msiexec.exe - Execute the DllRegisterServer function of a DLL</div>
<svg style="left:1509px;top:600px" width="20" height="20" viewBox="0 0 20 20" fill="#ef4466"><path d="M8.1 0.3H11.9V7.3H14.3L10 13.5L5.7 7.3H8.1Z"/><path d="M0.1 13H4.1V15.8H15.9V13H19.9V18.4A1.3 1.3 0 0 1 18.6 19.7H1.4A1.3 1.3 0 0 1 0.1 18.4Z"/></svg>
<svg style="left:1542px;top:601.8px" width="18" height="17" viewBox="0 0 18 17" fill="none" stroke="#22c55e" stroke-width="1.75"><rect x="1.35" y="1.2" width="6.1" height="5.9" rx="1.2"/><rect x="10.6" y="1.2" width="6" height="5.9" rx="1.2"/><rect x="1.35" y="9.7" width="6.1" height="5.6" rx="1.2"/><path d="M10 12.7H17M13.5 9.2V16.4"/></svg>
<svg style="left:1573px;top:599px" width="20" height="21" viewBox="0 0 20 21"><path d="M8.5 4.3H3.3a2.2 2.2 0 0 0-2.2 2.2V17.4a2.2 2.2 0 0 0 2.2 2.2H14.2a2.2 2.2 0 0 0 2.2-2.2V12.3" fill="none" stroke="#5aa8f5" stroke-width="1.7"/><path d="M3.41 17.71 L2.99 17.29 L3.77 13.54 L13.31 3.99 L16.71 7.39 L7.16 16.93Z" fill="#5aa8f5"/><path d="M14.09 3.08 L16.35 0.81 A2.50 2.50 0 0 1 19.89 4.35 L17.62 6.61 Z" fill="#5aa8f5"/></svg>
<svg style="left:1606px;top:599.5px" width="18" height="21" viewBox="0 0 18 21" fill="none" stroke="#7b7b82" stroke-width="1.5" stroke-linejoin="round"><path d="M5.2 4V2.4a1.5 1.5 0 0 1 1.5-1.5h4.6a1.5 1.5 0 0 1 1.5 1.5V4"/><path d="M0.3 4.3H17.7"/><path d="M2 4.3L3.6 18.6a1.6 1.6 0 0 0 1.6 1.4H12.8a1.6 1.6 0 0 0 1.6-1.4L16 4.3"/><path d="M6.5 6.6V17M11.5 6.6V17"/></svg>
<svg style="left:664.5px;top:656px" width="11" height="10" viewBox="0 0 11 10" fill="none" stroke="#8a8a92" stroke-width="1.2" stroke-linecap="round" stroke-linejoin="round"><path d="M5 1.2L1.3 5L5 8.8"/><path d="M10 1.2L6.3 5L10 8.8"/></svg>
<svg style="left:715px;top:656px" width="6" height="10" viewBox="0 0 6 10" fill="none" stroke="#8a8a92" stroke-width="1.2" stroke-linecap="round" stroke-linejoin="round"><path d="M5 1.2L1.3 5L5 8.8"/></svg>
<div class="pg" style="left:742px;top:654px;color:#ffffff">1</div>
<div class="pg" style="left:790px;top:654px;color:#b8b8c0">2</div>
<div class="pg" style="left:838px;top:654px;color:#b8b8c0">3</div>
<div class="pg" style="left:886px;top:654px;color:#b8b8c0">4</div>
<div class="pg" style="left:934px;top:654px;color:#b8b8c0">5</div>
<svg style="left:1003px;top:656px" width="6" height="10" viewBox="0 0 6 10" fill="none" stroke="#8a8a92" stroke-width="1.2" stroke-linecap="round" stroke-linejoin="round"><path d="M1 1.2L4.7 5L1 8.8"/></svg>
<svg style="left:1048.5px;top:656px" width="11" height="10" viewBox="0 0 11 10" fill="none" stroke="#8a8a92" stroke-width="1.2" stroke-linecap="round" stroke-linejoin="round"><path d="M1 1.2L4.7 5L1 8.8"/><path d="M6 1.2L9.7 5L6 8.8"/></svg>
<div class="a" style="left:742px;top:636px;width:48px;height:2px;background:#f06a80"></div>
<div class="a" style="left:0;top:958px;width:1655px;height:1px;background:#2c2c30"></div>
<div class="a" style="left:1535px;top:959px;width:1px;height:25px;background:#2c2c30"></div>
<svg style="left:1541px;top:963px" width="18" height="17" viewBox="0 0 18 17" fill="none" stroke="#303035" stroke-width="1.3" stroke-linejoin="round"><path d="M8.9 0.9L6 6.3L1.6 5.5L3.6 15.5H14.5L16.5 5.5L11.8 6.3Z"/><path d="M3.3 12.6H14.7"/></svg>
<svg style="left:1566px;top:964px" width="17" height="17" viewBox="0 0 17 17" fill="none" stroke="#3c3c42" stroke-width="1.1" stroke-linejoin="round"><rect x="0.55" y="0.55" width="15.3" height="12.3" rx="2"/><path d="M0.8 9.6H15.6M5.4 12.8L4.2 15.6H12.2L11 12.8"/></svg>
<div class="a" style="left:1588.6px;top:966px;font-size:12px;line-height:12px;color:#8a8a92;white-space:nowrap;letter-spacing:.3px">Status: <span style="color:#2fb344">OK</span></div>
<div class="a" style="left:0;top:984px;width:1655px;height:1px;background:#2b2e33"></div>
</body></html>
